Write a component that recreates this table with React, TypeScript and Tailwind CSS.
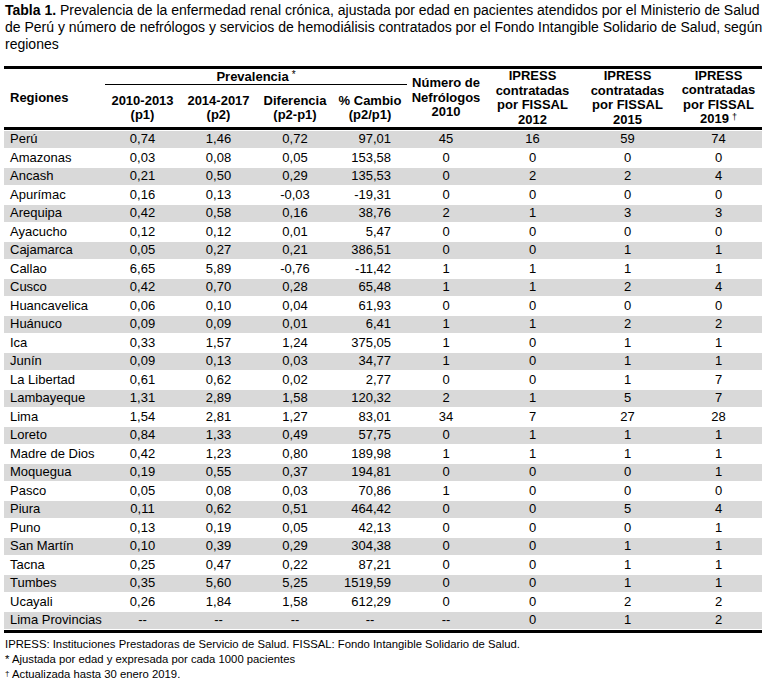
import React from "react";

const rows: string[][] = [
  ["Perú", "0,74", "1,46", "0,72", "97,01", "45", "16", "59", "74"],
  ["Amazonas", "0,03", "0,08", "0,05", "153,58", "0", "0", "0", "0"],
  ["Ancash", "0,21", "0,50", "0,29", "135,53", "0", "2", "2", "4"],
  ["Apurímac", "0,16", "0,13", "-0,03", "-19,31", "0", "0", "0", "0"],
  ["Arequipa", "0,42", "0,58", "0,16", "38,76", "2", "1", "3", "3"],
  ["Ayacucho", "0,12", "0,12", "0,01", "5,47", "0", "0", "0", "0"],
  ["Cajamarca", "0,05", "0,27", "0,21", "386,51", "0", "0", "1", "1"],
  ["Callao", "6,65", "5,89", "-0,76", "-11,42", "1", "1", "1", "1"],
  ["Cusco", "0,42", "0,70", "0,28", "65,48", "1", "1", "2", "4"],
  ["Huancavelica", "0,06", "0,10", "0,04", "61,93", "0", "0", "0", "0"],
  ["Huánuco", "0,09", "0,09", "0,01", "6,41", "1", "1", "2", "2"],
  ["Ica", "0,33", "1,57", "1,24", "375,05", "1", "0", "1", "1"],
  ["Junín", "0,09", "0,13", "0,03", "34,77", "1", "0", "1", "1"],
  ["La Libertad", "0,61", "0,62", "0,02", "2,77", "0", "0", "1", "7"],
  ["Lambayeque", "1,31", "2,89", "1,58", "120,32", "2", "1", "5", "7"],
  ["Lima", "1,54", "2,81", "1,27", "83,01", "34", "7", "27", "28"],
  ["Loreto", "0,84", "1,33", "0,49", "57,75", "0", "1", "1", "1"],
  ["Madre de Dios", "0,42", "1,23", "0,80", "189,98", "1", "1", "1", "1"],
  ["Moquegua", "0,19", "0,55", "0,37", "194,81", "0", "0", "0", "1"],
  ["Pasco", "0,05", "0,08", "0,03", "70,86", "1", "0", "0", "0"],
  ["Piura", "0,11", "0,62", "0,51", "464,42", "0", "0", "5", "4"],
  ["Puno", "0,13", "0,19", "0,05", "42,13", "0", "0", "0", "1"],
  ["San Martín", "0,10", "0,39", "0,29", "304,38", "0", "0", "1", "1"],
  ["Tacna", "0,25", "0,47", "0,22", "87,21", "0", "0", "1", "1"],
  ["Tumbes", "0,35", "5,60", "5,25", "1519,59", "0", "0", "1", "1"],
  ["Ucayali", "0,26", "1,84", "1,58", "612,29", "0", "0", "2", "2"],
  ["Lima Provincias", "--", "--", "--", "--", "--", "0", "1", "2"],
];

const cols = "grid grid-cols-[101px_75px_77px_76px_74px_78px_95px_95px_87px]";

function Ipress({ year, dagger }: { year: string; dagger?: boolean }) {
  return (
    <div className="row-span-2 flex flex-col items-center justify-center text-center leading-[14.5px]">
      <span>IPRESS</span>
      <span>contratadas</span>
      <span>por FISSAL</span>
      <span>
        {year}
        {dagger && <span className="relative -top-[3px] ml-[3px] text-[9px] font-normal">†</span>}
      </span>
    </div>
  );
}

function SubHead({ a, b }: { a: string; b: string }) {
  return (
    <div className="flex flex-col items-center justify-end pb-[5px] leading-[14px]">
      <span>{a}</span>
      <span>{b}</span>
    </div>
  );
}

export default function App() {
  return (
    <div className="w-[769px] h-[683px] bg-white text-black font-['Liberation_Sans',Arial,sans-serif]">
      <p className="pt-[2px] pl-[5px] text-[14px] leading-[17px] whitespace-nowrap">
        <b>Tabla 1.</b> Prevalencia de la enfermedad renal crónica, ajustada por edad en pacientes atendidos por el Ministerio de Salud
        <br />
        de Perú y número de nefrólogos y servicios de hemodiálisis contratados por el Fondo Intangible Solidario de Salud, según
        <br />
        regiones
      </p>

      <div className="ml-[4px] mt-[13px] w-[758px] border-y-[3px] border-black text-[13px]">
        <div className={`${cols} grid-rows-[16px_42px] border-b-[3px] border-black font-bold`}>
          <div className="row-span-2 flex items-center pl-[6px]">Regiones</div>
          <div className="col-span-4 flex items-center justify-center border-b border-black leading-[14px]">
            Prevalencia
            <span className="relative -top-[2px] ml-[3px] text-[10px] font-normal">*</span>
          </div>
          <div className="row-span-2 flex flex-col items-center justify-center leading-[14.5px]">
            <span>Número de</span>
            <span>Nefrólogos</span>
            <span>2010</span>
          </div>
          <Ipress year="2012" />
          <Ipress year="2015" />
          <Ipress year="2019" dagger />
          <SubHead a="2010-2013" b="(p1)" />
          <SubHead a="2014-2017" b="(p2)" />
          <SubHead a="Diferencia" b="(p2-p1)" />
          <SubHead a="% Cambio" b="(p2/p1)" />
        </div>

        {rows.map((r, i) => (
          <div
            key={r[0]}
            className={`${cols} h-[18.5px] py-px leading-[16.5px] ${i % 2 === 0 ? "bg-[#d9d9d9] bg-clip-content" : ""}`}
          >
            <div className="pl-[6px] whitespace-nowrap">{r[0]}</div>
            <div className="text-center">{r[1]}</div>
            <div className="text-center">{r[2]}</div>
            <div className="text-center">{r[3]}</div>
            <div className={r[4] === "--" ? "text-center" : "text-right pr-[16px]"}>{r[4]}</div>
            <div className="text-center">{r[5]}</div>
            <div className="text-center">{r[6]}</div>
            <div className="text-center">{r[7]}</div>
            <div className="text-center">{r[8]}</div>
          </div>
        ))}
      </div>

      <div className="mt-[4px] pl-[5px] text-[11.3px] leading-[15px]">
        <p>IPRESS: Instituciones Prestadoras de Servicio de Salud. FISSAL: Fondo Intangible Solidario de Salud.</p>
        <p>* Ajustada por edad y expresada por cada 1000 pacientes</p>
        <p>
          <span className="relative -top-[2px] text-[8px]">†</span> Actualizada hasta 30 enero 2019.
        </p>
      </div>
    </div>
  );
}
